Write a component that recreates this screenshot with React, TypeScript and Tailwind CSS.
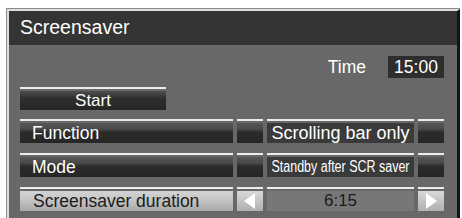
import React from "react";

const font = { fontFamily: '"Liberation Sans", Arial, sans-serif' };

function Line() {
  return <div className="h-[2px] bg-[#ececec]" />;
}

function Cell({
  className,
  children,
}: {
  className: string;
  children?: React.ReactNode;
}) {
  return (
    <div className="flex flex-col">
      <Line />
      <div className={"mt-[2px] h-[20px] flex items-center " + className}>
        {children}
      </div>
    </div>
  );
}

const dark =
  "bg-[linear-gradient(to_bottom,#565656_0%,#4a4a4a_30%,#2c2c2c_45%,#262626_100%)]";

function Row({
  label,
  value,
  active,
  condensed,
}: {
  label: string;
  value: string;
  active?: boolean;
  condensed?: boolean;
}) {
  if (active) {
    return (
      <div className="grid grid-cols-[213px_26px_147px_26px] gap-x-[4px]">
        <Cell className="bg-[linear-gradient(to_bottom,#d4d4d4_0%,#c4c4c4_45%,#a8a8a8_100%)] pl-[13px] text-[#1c1c1c] text-[17.5px]">
          {label}
        </Cell>
        <Cell className="bg-[linear-gradient(to_bottom,#d8d8d8,#b0b0b0)] justify-center">
          <svg width="14" height="18" viewBox="0 0 14 18">
            <polygon points="1,9 12,1 12,17" fill="#ffffff" />
          </svg>
        </Cell>
        <Cell className="bg-[#777777] justify-center text-[#1a1a1a] text-[17px]">
          {value}
        </Cell>
        <Cell className="bg-[linear-gradient(to_bottom,#d8d8d8,#b0b0b0)] justify-center">
          <svg width="14" height="18" viewBox="0 0 14 18">
            <polygon points="13,9 2,1 2,17" fill="#ffffff" />
          </svg>
        </Cell>
      </div>
    );
  }
  return (
    <div className="grid grid-cols-[213px_26px_147px_26px] gap-x-[4px]">
      <Cell className={dark + " pl-[12px] text-white text-[17.5px]"}>{label}</Cell>
      <Cell className={dark} />
      <Cell className="bg-[#3a3a3a] justify-center text-white whitespace-nowrap">
        {condensed ? (
          <span className="inline-block text-[16px] scale-x-[0.78]">{value}</span>
        ) : (
          <span className="text-[18px]">{value}</span>
        )}
      </Cell>
      <Cell className={dark} />
    </div>
  );
}

export default function App() {
  return (
    <div
      className="w-[462px] h-[218px] bg-white overflow-hidden pl-[6px] pt-[8px]"
      style={font}
    >
      <div className="w-[454px] h-[230px] border-l border-t border-[#8c8c8c]">
        <div className="h-full border-l-2 border-t-2 border-[#dedede] border-r-[3px] border-r-[#141414] flex flex-col">
          <div className="h-[34px] bg-[#343434] flex items-center pl-[11px] text-white text-[19.5px]">
            Screensaver
          </div>
          <div className="flex-1 bg-[#686868] pl-[11px]">
            <div className="flex items-center justify-end pr-[13px] mt-[11px] h-[22px]">
              <span className="text-white text-[17.5px] mr-[22px]">Time</span>
              <div className="w-[56px] h-[22px] bg-[#2e2e2e] flex items-center justify-center text-white text-[17.5px]">
                15:00
              </div>
            </div>
            <div className="mt-[9px] w-[146px]">
              <Line />
              <div className="mt-[2px] h-[19px] flex items-center justify-center text-white text-[17px] bg-[linear-gradient(to_bottom,#4e4e4e_0%,#2e2e2e_40%,#262626_100%)]">
                Start
              </div>
            </div>
            <div className="mt-[9px] flex flex-col gap-y-[10px]">
              <Row label="Function" value="Scrolling bar only" />
              <Row label="Mode" value="Standby after SCR saver" condensed />
              <Row label="Screensaver duration" value="6:15" active />
            </div>
          </div>
        </div>
      </div>
    </div>
  );
}
